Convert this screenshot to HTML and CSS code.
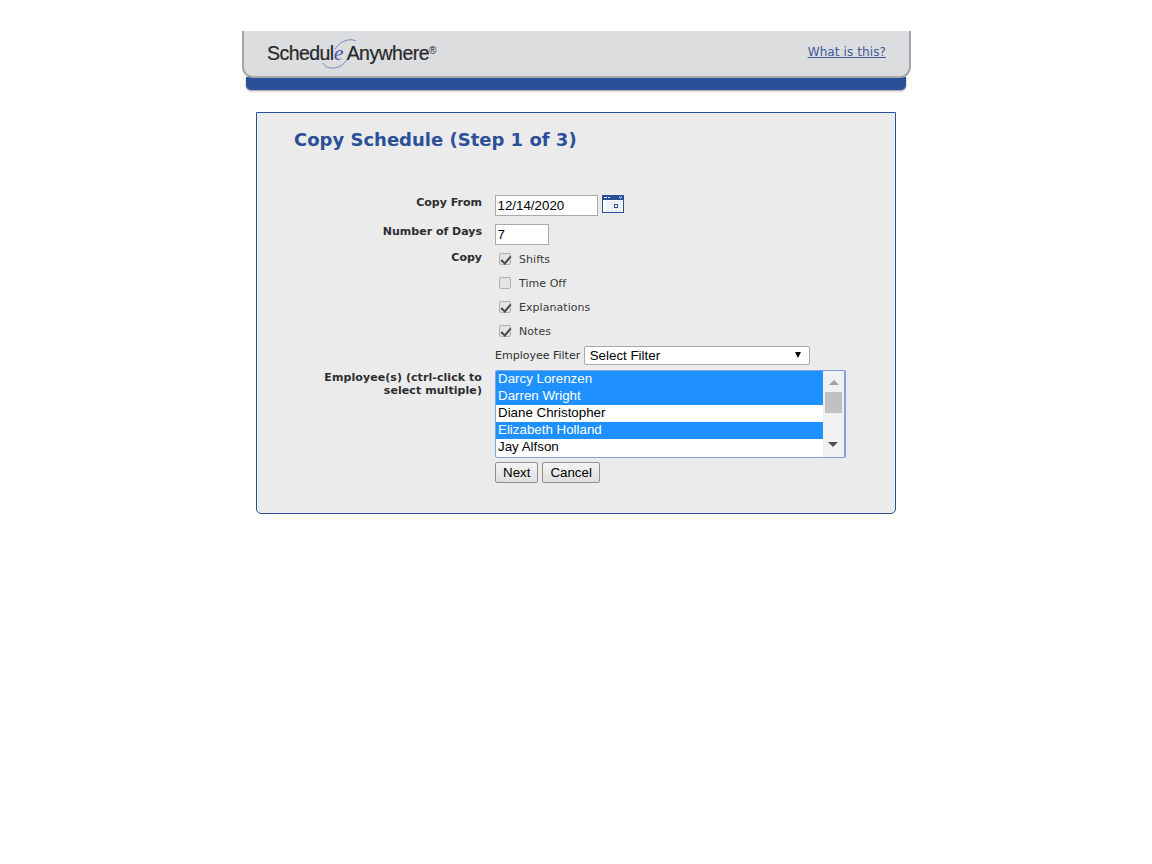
FILE: index.html
```html
<!DOCTYPE html>
<html lang="en">
<head>
<meta charset="utf-8">
<title>Copy Schedule</title>
<link rel="stylesheet" href="styles.css">
</head>
<body>
<div class="page">
  <header class="banner">
    <div class="banner-main">
      <div class="logo">
        <svg class="swoosh" width="40" height="34" viewBox="0 0 40 34" aria-hidden="true">
          <path d="M2 25 C5 33 24 33 29 15" fill="none" stroke="#7c84c4" stroke-width="1"/>
          <path d="M14 11 C20 2 30 0 35 3" fill="none" stroke="#7c84c4" stroke-width="1"/>
        </svg>
        <span class="logo-text">Schedul<em>e</em> Anywhere<sup>®</sup></span>
      </div>
      <a class="what" href="#">What is this?</a>
    </div>
    <div class="banner-band"></div>
  </header>

  <main class="card">
    <h1 class="title">Copy Schedule (Step 1 of 3)</h1>
    <form class="form">
      <div class="label row-from">Copy From</div>
      <div class="value row-from">
        <input class="text date" type="text" value="12/14/2020">
        <svg class="cal" width="22" height="18" viewBox="0 0 22 18" aria-hidden="true">
          <rect x="0.5" y="0.5" width="21" height="17" fill="#fff" stroke="#2b4f98"/>
          <rect x="1" y="1" width="20" height="4" fill="#2b4f98"/>
          <path d="M2 2.5h3M6 2.5h2M17 2h1M19 2h1M18 3h1" stroke="#fff" stroke-width="1"/>
          <path d="M3 7h16M3 10h16M3 13h16M3 16h16M6 6v11M10 6v11M14 6v11M18 6v11" stroke="#dfe4f0" stroke-width="1"/>
          <rect x="12.5" y="9.5" width="3" height="3" fill="#fff" stroke="#2b4f98"/>
        </svg>
      </div>

      <div class="label row-days">Number of Days</div>
      <div class="value row-days"><input class="text days" type="text" value="7"></div>

      <div class="label row-copy">Copy</div>
      <div class="value checks">
        <label class="check"><input type="checkbox" checked><span>Shifts</span></label>
        <label class="check"><input type="checkbox"><span>Time Off</span></label>
        <label class="check"><input type="checkbox" checked><span>Explanations</span></label>
        <label class="check"><input type="checkbox" checked><span>Notes</span></label>
      </div>

      <div class="label"></div>
      <div class="value filter">
        <span class="filter-label">Employee Filter</span>
        <div class="select"><span>Select Filter</span><i class="caret"></i></div>
      </div>

      <div class="label row-emp">Employee(s) (ctrl-click to select multiple)</div>
      <div class="value">
        <div class="listbox">
          <ul class="options">
            <li class="on">Darcy Lorenzen</li>
            <li class="on">Darren Wright</li>
            <li>Diane Christopher</li>
            <li class="on">Elizabeth Holland</li>
            <li>Jay Alfson</li>
          </ul>
          <div class="scroll">
            <i class="arrow up"></i>
            <i class="thumb"></i>
            <i class="arrow down"></i>
          </div>
        </div>
        <div class="buttons">
          <button class="btn" type="button">Next</button>
          <button class="btn" type="button">Cancel</button>
        </div>
      </div>
    </form>
  </main>
</div>
</body>
</html>
```
FILE: styles.css
```css
* { box-sizing: border-box; }
html, body { margin: 0; padding: 0; background: #fff; }
body { font-family: "DejaVu Sans", Verdana, sans-serif; color: #2e2e2e; }

.page { width: 1152px; padding-top: 31px; display: flex; flex-direction: column; align-items: center; }

.banner { width: 669px; margin-left: 1px; display: flex; flex-direction: column; align-items: flex-start; }
.banner-main {
  width: 669px; height: 47px; background: #dcddde;
  border: 2px solid #a6a7aa; border-top: 0;
  border-radius: 0 0 11px 11px;
  display: flex; align-items: center; justify-content: space-between;
  padding: 0 23px 4px 23px;
  position: relative; z-index: 1;
}
.banner-band {
  width: 660px; height: 13px; margin: -1px 0 0 4px; background: #2b4f98;
  border-radius: 0 0 5px 5px;
  box-shadow: 0 1px 2px #8f9092;
}
.logo { position: relative; height: 28px; display: flex; align-items: center; margin-top: 3px; }
.logo-text { font-family: "Liberation Sans", Arial, sans-serif; font-size: 19.5px; letter-spacing: -0.55px; color: #26282b; white-space: pre; position: relative; -webkit-text-stroke: 0.2px #26282b; }
.logo-text em { font-family: "Liberation Serif", serif; color: #4c56a8; font-size: 22px; -webkit-text-stroke: 0; }
.logo-text sup { font-size: 10px; line-height: 0; vertical-align: 6px; letter-spacing: 0; -webkit-text-stroke: 0; }
.swoosh { position: absolute; left: 54px; top: -1px; }
.what { font-size: 12px; letter-spacing: 0.1px; color: #3f5a99; text-decoration: underline; }

.card {
  width: 640px; height: 402px; margin-top: 22px; margin-left: 0;
  background: #ebebeb; border: 1px solid #2b4f98; border-radius: 0 0 5px 5px;
  padding: 15px 0 0 37px;
}
.title { margin: 0; font-size: 18px; line-height: 24px; font-weight: bold; color: #2b4f98; }

.form {
  display: grid; grid-template-columns: 188px 1fr; column-gap: 13px;
  margin-top: 43px; font-size: 11px; line-height: 13px;
}
.label { text-align: right; font-weight: bold; color: #2e2e2e; }
.row-from { min-height: 29px; }
.row-days { min-height: 23px; }
.row-from.label { padding-top: 1px; }
.row-days.label { padding-top: 1px; }
.row-copy { padding-top: 4px; }
.row-emp { padding-top: 1px; letter-spacing: 0.07px; }
.value.row-from { display: flex; align-items: flex-start; gap: 4px; }

.text {
  height: 21px; padding: 1px 2px 1px 1.5px; margin: 0;
  border: 1px solid #a9a9a9; background: #fff; border-radius: 0;
  font-family: "Liberation Sans", Arial, sans-serif; font-size: 13.33px; color: #000;
}
.date { width: 103px; }
.days { width: 54px; }

.checks { display: flex; flex-direction: column; }
.check { height: 24px; display: flex; align-items: center; color: #3a3a3a; letter-spacing: 0.05px; }
.check span { padding-top: 1px; }
.check input {
  appearance: none; -webkit-appearance: none; position: relative;
  width: 12px; height: 12px; margin: 0 8px 0 4px;
  background: #e3e3e3; border: 1px solid #b2b2b2; border-radius: 2px;
}
.check input:checked::after {
  content: ""; position: absolute; left: 3px; top: 0; width: 4px; height: 8px;
  border: solid #4a4a4a; border-width: 0 2px 2px 0; transform: rotate(40deg);
}

.filter { display: flex; align-items: flex-start; gap: 4px; height: 27px; padding-top: 3px; }
.filter-label { color: #2e2e2e; padding-top: 3px; }
.select {
  width: 226px; height: 19px; background: #fff; border: 1px solid #a9a9a9; border-radius: 2px;
  font-family: "Liberation Sans", Arial, sans-serif; font-size: 13.33px; line-height: 17px; color: #000;
  padding: 0 8px 0 4.5px; display: flex; align-items: center; justify-content: space-between;
}
.caret { width: 0; height: 0; border-left: 3.5px solid transparent; border-right: 3.5px solid transparent; border-top: 6px solid #000; margin-bottom: 2px; }

.listbox {
  width: 351px; height: 88px; display: flex; background: #fff;
  border: 1px solid #7fa3e2; border-right-width: 2px; border-radius: 2px; overflow: hidden;
}
.options {
  list-style: none; margin: 0; padding: 0; width: 327px;
  font-family: "Liberation Sans", Arial, sans-serif; font-size: 13.33px; line-height: 15px; color: #000;
}
.options li { height: 17px; padding-left: 2px; white-space: nowrap; }
.options li.on { background: #1e90ff; color: #fff; }
.scroll { width: 21px; background: #f1f1f1; display: flex; flex-direction: column; align-items: center; padding-top: 9px; position: relative; }
.arrow { width: 0; height: 0; border-left: 5px solid transparent; border-right: 5px solid transparent; }
.arrow.up { border-bottom: 5px solid #a3a3a3; }
.arrow.down { border-top: 5px solid #505050; position: absolute; bottom: 10px; left: 5px; }
.thumb { width: 17px; height: 21px; background: #c1c1c1; margin-top: 7px; }

.buttons { display: flex; gap: 4px; margin-top: 4px; }
.btn {
  height: 21px; padding: 0 7px; margin: 0;
  border: 1px solid #8f8f8f; border-radius: 2px;
  background: linear-gradient(#f4f4f4, #dedede);
  font-family: "Liberation Sans", Arial, sans-serif; font-size: 13.33px; color: #000;
}
```
